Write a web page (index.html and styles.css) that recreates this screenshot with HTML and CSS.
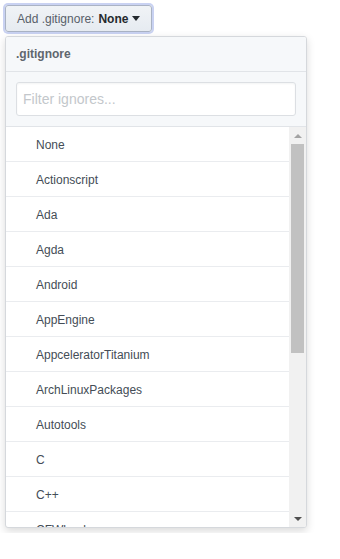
FILE: index.html
```html
<!DOCTYPE html>
<html lang="en">
<head>
    <meta charset="UTF-8">
    <meta name="viewport" content="width=device-width, initial-scale=1.0">
    <title>Add .gitignore</title>
    <link rel="stylesheet" href="styles.css">
</head>
<body>
    <div class="select-menu">
        <button class="btn" type="button">
            <span class="btn-label">Add .gitignore:</span>
            <span class="btn-value">None</span>
            <span class="caret"></span>
        </button>
        <div class="modal">
            <div class="modal-header">.gitignore</div>
            <div class="filter">
                <input class="filter-input" type="text" placeholder="Filter ignores...">
            </div>
            <div class="list-wrap">
                <ul class="list">
                    <li>None</li>
                    <li>Actionscript</li>
                    <li>Ada</li>
                    <li>Agda</li>
                    <li>Android</li>
                    <li>AppEngine</li>
                    <li>AppceleratorTitanium</li>
                    <li>ArchLinuxPackages</li>
                    <li>Autotools</li>
                    <li>C</li>
                    <li>C++</li>
                    <li>CFWheels</li>
                </ul>
                <div class="scrollbar">
                    <span class="arrow arrow-up"></span>
                    <span class="thumb"></span>
                    <span class="track"></span>
                    <span class="arrow arrow-down"></span>
                </div>
            </div>
        </div>
    </div>
</body>
</html>
```
FILE: styles.css
```css
*{
    margin: 0;
    padding: 0;
    box-sizing: border-box;
    list-style: none;
}
body{
    padding: 5px;
    background: #fff;
    font-family: "Liberation Sans", Arial, sans-serif;
    font-size: 12px;
    color: #24292e;
}
.select-menu{
    display: flex;
    flex-direction: column;
    align-items: flex-start;
}
.btn{
    display: flex;
    align-items: center;
    height: 27px;
    padding: 0 11px;
    font-family: inherit;
    font-size: 12px;
    border: 1px solid #aab3c4;
    border-radius: 3px;
    background: linear-gradient(#f0f3f6, #e6ebf1);
    box-shadow: 0 0 0 2px #c9d2f2;
    color: #586069;
}
.btn-value{
    margin-left: 4px;
    font-weight: bold;
    color: #24292e;
}
.caret{
    margin-left: 4px;
    width: 0;
    height: 0;
    border-left: 4px solid transparent;
    border-right: 4px solid transparent;
    border-top: 5px solid #24292e;
}
.modal{
    width: 302px;
    margin-top: 4px;
    border: 1px solid #d5d8dc;
    border-radius: 3px;
    background: #fff;
    box-shadow: 0 3px 8px rgba(0,0,0,0.15);
    overflow: hidden;
}
.modal-header{
    height: 35px;
    padding: 0 10px;
    line-height: 35px;
    background: #f6f8fa;
    border-bottom: 1px solid #e1e4e8;
    font-weight: bold;
    color: #5f666d;
}
.filter{
    padding: 10px 10px;
    background: #f6f8fa;
    border-bottom: 1px solid #e1e4e8;
}
.filter-input{
    display: block;
    width: 100%;
    height: 34px;
    padding: 0 6px;
    font-family: inherit;
    font-size: 14px;
    border: 1px solid #dcdfe3;
    border-radius: 3px;
    background: #fff;
    box-shadow: inset 0 1px 2px rgba(27,31,35,0.05);
    outline: none;
}
.filter-input::placeholder{
    color: #c3c7cb;
}
.list-wrap{
    display: flex;
    height: 400px;
}
.list{
    flex: 1;
    overflow: hidden;
}
.list li{
    height: 35px;
    padding-left: 30px;
    line-height: 36px;
    border-bottom: 1px solid #eaecef;
    color: #444d56;
}
.scrollbar{
    width: 17px;
    display: flex;
    flex-direction: column;
    align-items: center;
    background: #f1f1f1;
}
.arrow{
    height: 17px;
    width: 100%;
    display: flex;
    align-items: center;
    justify-content: center;
}
.arrow::after{
    content: "";
    width: 0;
    height: 0;
    border-left: 4px solid transparent;
    border-right: 4px solid transparent;
}
.arrow-up::after{
    border-bottom: 4px solid #a3a3a3;
}
.arrow-down::after{
    border-top: 4px solid #505050;
}
.thumb{
    width: 13px;
    height: 209px;
    background: #c1c1c1;
}
.track{
    flex: 1;
}
```
